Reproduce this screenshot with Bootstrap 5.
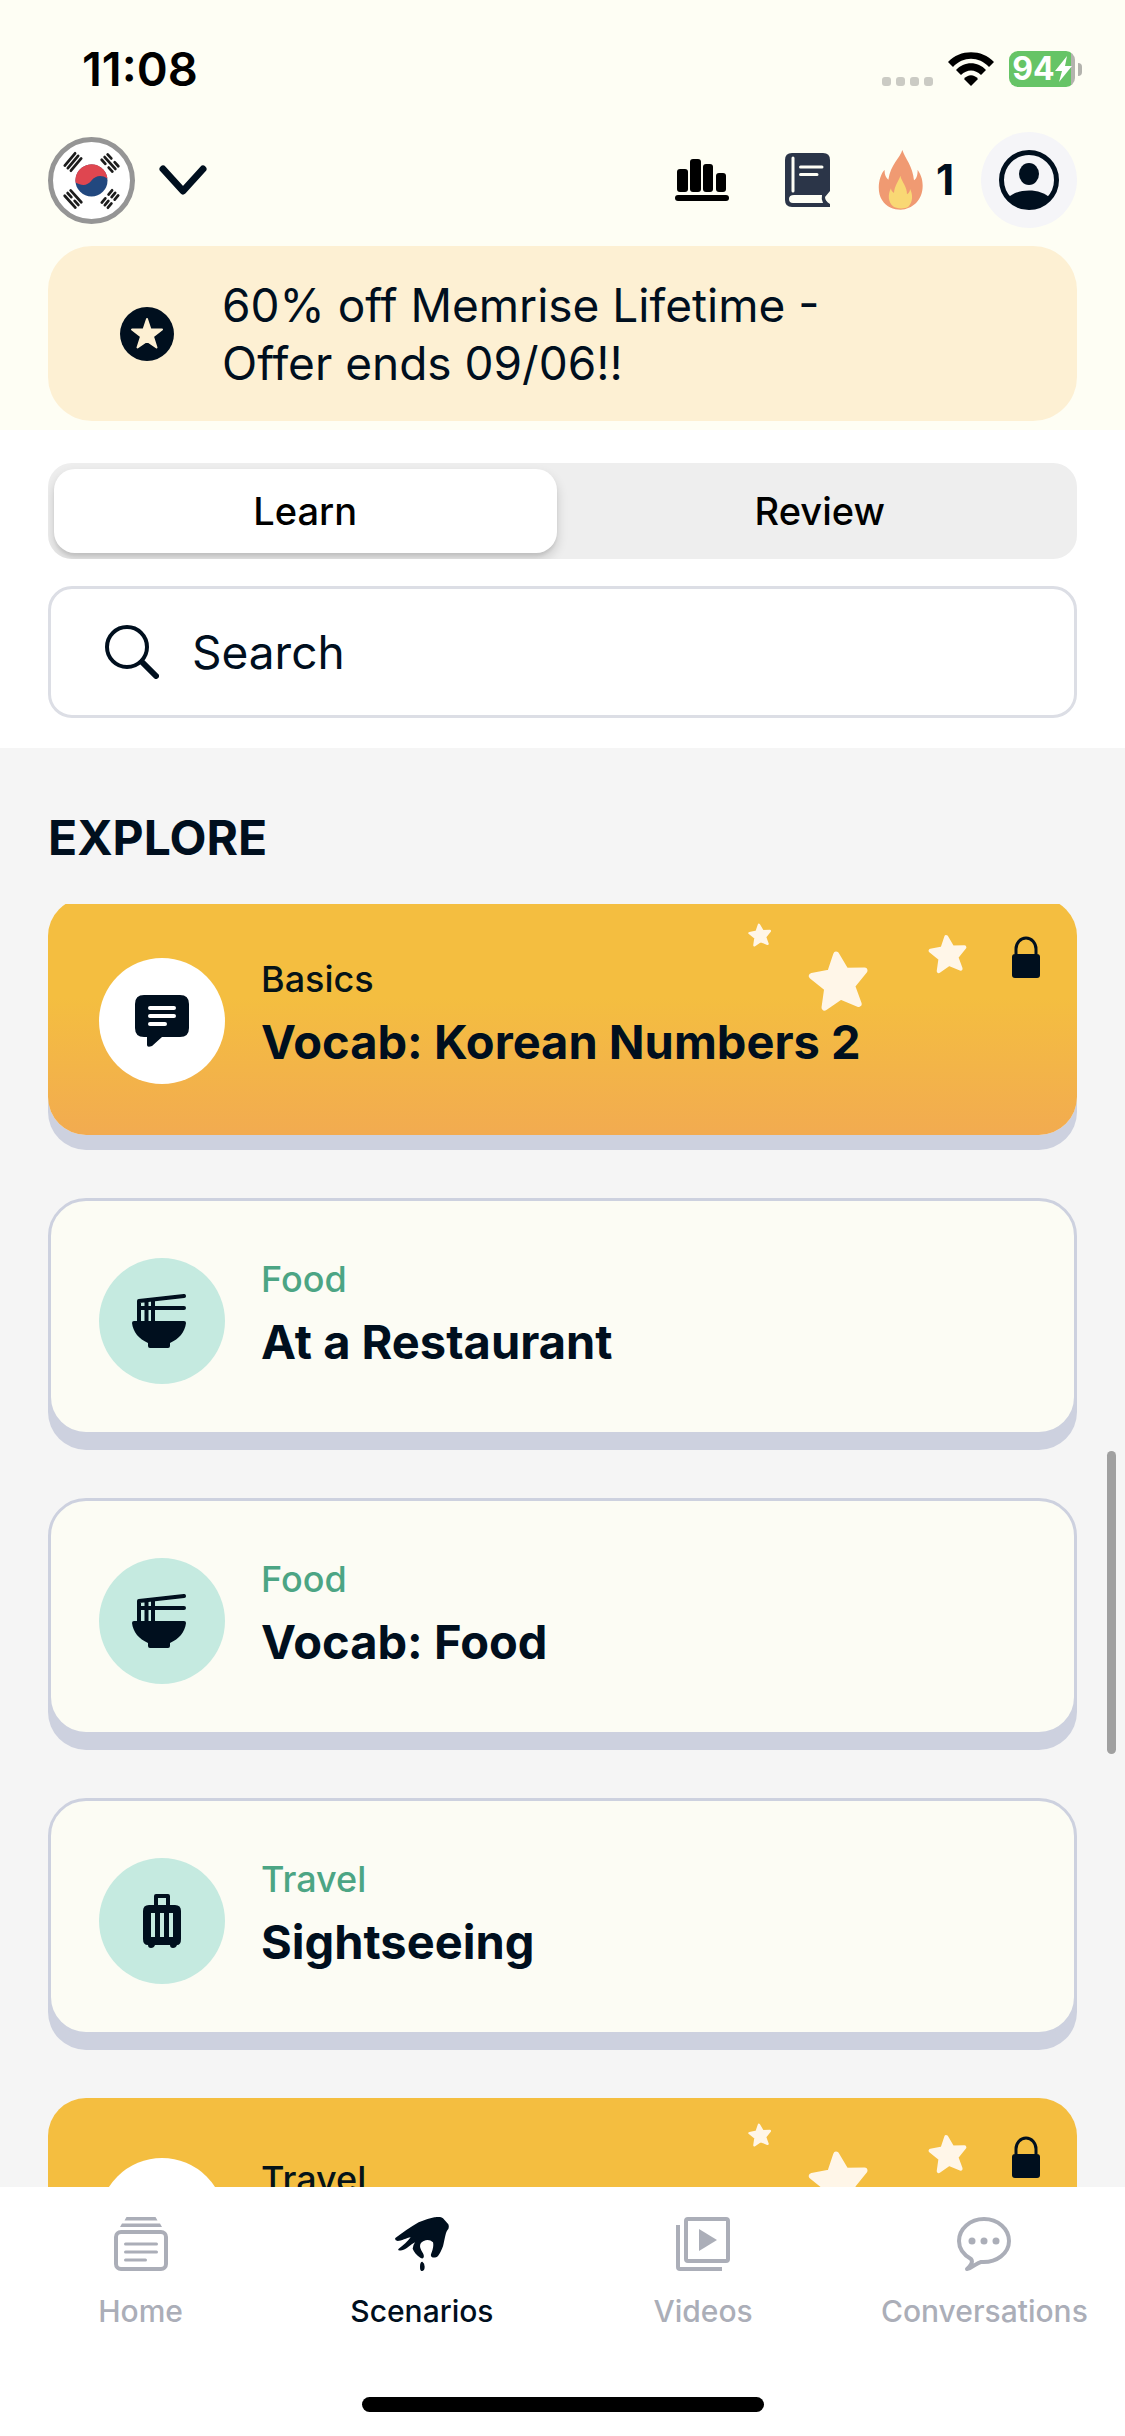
<!DOCTYPE html>
<html lang="en">
<head>
<meta charset="utf-8">
<meta name="viewport" content="width=device-width, initial-scale=1">
<title>Scenarios</title>
<link href="https://cdn.jsdelivr.net/npm/bootstrap@5.3.0/dist/css/bootstrap.min.css" rel="stylesheet">
<style>
  :root { --ink: #000f1e; --cream: #fefef4; --edge: #cdd1df; --muted-ink: #abaeb8; --gutter: 48px; }
  body { font-family: Inter, "Noto Sans", sans-serif; color: var(--ink); background: #fff; }
  svg { display: block; flex: none; }
  .gutter { padding-left: var(--gutter); padding-right: var(--gutter); }
  .app-header { background: var(--cream); padding-bottom: 9px; }

  .status-bar { padding: 45px 43px 39px 82px; height: 132px; color: #000; }
  .clock { font-size: 47px; font-weight: 600; line-height: 48px; }
  .status-icons { gap: 15px; }
  .signal { gap: 5px; padding-top: 24px; }
  .signal i { width: 9px; height: 9px; border-radius: 3px; background: #cbcbc4; }
  .battery { width: 66px; height: 36px; border-radius: 9px; color: #fff; font-size: 32px; font-weight: 700; line-height: 36px;
             background: linear-gradient(90deg, #66c466 94%, #b3b3ad 94%); }
  .battery-nub { width: 4px; height: 13px; border-radius: 0 6px 6px 0; background: #b3b3ad; margin-left: 3px; }

  .toolbar { height: 96px; margin-bottom: 18px; }
  .icon-btn { padding: 0; border: 0; background: none; color: inherit; }
  .flag-btn { gap: 24px; }
  .tools { gap: 48px; }
  .streak { gap: 13px; font-size: 42px; font-weight: 700; line-height: 48px; }
  .profile { width: 96px; height: 96px; background: #f5f5f8; margin-left: -21px; }

  .promo { background: #fdf0d3; border-radius: 44px; padding: 0 72px; gap: 48px; font-size: 46px; line-height: 58px; min-height: 175px; }
  .promo span { max-width: 620px; }

  .controls { padding-top: 33px; padding-bottom: 30px; gap: 27px; }
  .segmented { background: #eee; border-radius: 24px; padding: 6px; gap: 12px; height: 96px; overflow: hidden; }
  .segmented .nav-link { height: 84px; border-radius: 21px; padding: 0; color: #000; font-size: 38px; font-weight: 500; }
  .segmented .nav-link.active { background: #fff; color: #000; box-shadow: 0 6px 12px rgba(0,0,0,.16), 0 3px 3px rgba(0,0,0,.06); }
  .search-box { height: 132px; border: 3px solid #dcdee5; border-radius: 24px; padding: 0 54px; gap: 18px; }
  .search-box .form-control { font-size: 46px; padding: 0 15px; color: var(--ink); box-shadow: none; background: none; }
  .search-box .form-control::placeholder { color: var(--ink); opacity: 1; }

  .explore { background: #f5f5f5; min-height: 0; }
  .explore h1 { font-size: 48px; font-weight: 700; line-height: 60px; padding-top: 60px; margin: 0 0 36px; }
  .scroller { min-height: 0; overflow: hidden; }
  .scenario-list { gap: 63px; margin: -6px 0 0; padding-bottom: 63px; }
  .scenario { flex-direction: row; align-items: flex-start; flex: none; gap: 36px; padding: 57px 48px 48px; color: var(--ink);
              text-decoration: none; background: #fcfcf4; border: 3px solid var(--edge); border-radius: 38px;
              box-shadow: 0 15px 0 var(--edge); }
  .scenario.premium { border-color: transparent; background: linear-gradient(#f4be40 42%, #f2ab50) border-box; }
  .disc { width: 126px; height: 126px; background: #c5eae0; }
  .premium .disc { background: #fff; }
  .topic { font-size: 36px; line-height: 42px; font-weight: 500; color: #4ca584; margin-bottom: 12px; }
  .premium .topic { color: #051318; }
  .scenario-title { font-size: 47px; line-height: 60px; font-weight: 700; margin: 0; }
  .sparkle { top: 0; right: 0; }
  .scroll-thumb { right: 9px; top: 1451px; width: 9px; height: 303px; border-radius: 5px; background: #a0a0a0; }

  .tabbar { height: 249px; padding-top: 30px; background: #fff; }
  .tabbar .nav-link { flex: 1 1 0; padding: 0; color: var(--muted-ink); font-size: 30px; line-height: 36px; font-weight: 500; gap: 22px; }
  .tabbar .nav-link.active { color: var(--ink); }
  .home-bar { width: 402px; height: 15px; border-radius: 8px; background: #000; margin-bottom: 24px; }
</style>
</head>
<body class="vh-100 d-flex flex-column overflow-hidden position-relative">

<svg width="0" height="0" class="position-absolute" aria-hidden="true">
  <defs>
    <path id="star" d="M0-17 5-6 17-5 8 4 11 16 0 10-11 16-8 4-17-5-5-6Z" stroke-width="4" stroke-linejoin="round"/>
    <g id="tri-broken"><path d="M-8 0H-2.500M2.500 0H8"/></g>
    <g id="bowl" fill="#000f1e" stroke="none">
      <path d="M2 27H52Q54 27 54 29C53 38 47 45 38 49V52Q38 54 36 54H18Q16 54 16 52V49C7 45 1 38 0 29Q0 27 2 27Z"/>
      <path d="M7 28V7L52 2M7 14H52M14.500 28V7M21 28V6" fill="none" stroke="#000f1e" stroke-width="4" stroke-linecap="round" stroke-linejoin="round"/>
    </g>
    <g id="case">
      <path d="M13 13V2H25V13" fill="none" stroke="#000f1e" stroke-width="4" stroke-linejoin="round"/>
      <path fill="#000f1e" fill-rule="evenodd" d="M6 11H32Q38 11 38 17V45Q38 51 34 51Q33 54 30 54T27 51H12Q11 54 8 54T5 51Q0 51 0 45V17Q0 11 6 11ZM8 19V43H12V19ZM17 19V43H21V19ZM26 19V43H30V19Z"/>
    </g>
    <g id="sparkles" fill="#fff6e8" stroke="#fff6e8">
      <use href="#star" transform="translate(32 37) rotate(-6) scale(.6)"/>
      <use href="#star" transform="translate(111 83) rotate(-6) scale(1.55)"/>
      <use href="#star" transform="translate(220 56) rotate(-6) scale(1)"/>
      <path d="M288 56V51A10 11 0 0 1 308 51V56" fill="none" stroke="#000f1e" stroke-width="3"/>
      <rect x="284" y="56" width="28" height="24" rx="3" fill="#000f1e" stroke="none"/>
    </g>
  </defs>
</svg>

<header class="app-header flex-shrink-0">
  <div class="status-bar d-flex justify-content-between align-items-center">
    <span class="clock">11:08</span>
    <div class="status-icons d-flex align-items-center">
      <div class="signal d-flex"><i></i><i></i><i></i><i></i></div>
      <svg width="46" height="34" viewBox="0 0 46 34" aria-label="Wi-Fi">
        <path d="M0 10C12-3 34-3 46 10L41 15C31 4 15 4 5 15Z"/>
        <path d="M8 18C16 9 30 9 38 18L33 23C27 17 19 17 13 23Z"/>
        <path d="M16 27C20 22 26 22 30 27L23 34Z"/>
      </svg>
      <div class="d-flex align-items-center">
        <div class="battery d-flex align-items-center justify-content-center"><span>94</span>
          <svg width="17" height="26" viewBox="0 0 17 26" fill="#fff"><path d="M12 0 0 15H7L4 26 17 10H10Z"/></svg>
        </div>
        <div class="battery-nub"></div>
      </div>
    </div>
  </div>

  <div class="toolbar gutter d-flex justify-content-between align-items-center">
    <button class="icon-btn flag-btn d-flex align-items-center" aria-label="Korean course">
      <svg width="87" height="87" viewBox="0 0 87 87">
        <circle cx="43.500" cy="43.500" r="41" fill="#fff" stroke="#959595" stroke-width="5"/>
        <g transform="translate(43.500 43.500)">
          <circle r="16" fill="#22487f"/>
          <path d="M-16 2A16 16 0 0 1 16-2C10-6 4-5 0 0S-9 6-16 2Z" fill="#df4650"/>
        </g>
        <g stroke="#1c1c1c" stroke-width="2.700" stroke-linecap="round">
          <g transform="translate(25 25) rotate(-50)"><path d="M-8-4H8M-8 0H8M-8 4H8"/></g>
          <g transform="translate(62 26) rotate(48)"><use href="#tri-broken" y="-4"/><path d="M-8 0H8"/><use href="#tri-broken" y="4"/></g>
          <g transform="translate(25 62) rotate(48)"><path d="M-8-4H8M-8 4H8"/><use href="#tri-broken"/></g>
          <g transform="translate(62 62) rotate(-50)"><use href="#tri-broken" y="-4"/><use href="#tri-broken"/><use href="#tri-broken" y="4"/></g>
        </g>
      </svg>
      <svg width="48" height="30" viewBox="0 0 48 30"><path d="M4 4 24 26 44 4" fill="none" stroke="#000f1e" stroke-width="7" stroke-linecap="round" stroke-linejoin="round"/></svg>
    </button>
    <div class="tools d-flex align-items-center">
      <button class="icon-btn me-2" aria-label="Leaderboard">
        <svg width="54" height="42" viewBox="0 0 54 42">
          <rect x="2" y="10" width="11" height="23" rx="3"/><rect x="15" y="0" width="11" height="33" rx="3"/>
          <rect x="28" y="5" width="10" height="28" rx="3"/><rect x="41" y="14" width="10" height="19" rx="3"/>
          <rect y="36" width="54" height="6" rx="3"/>
        </svg>
      </button>
      <button class="icon-btn" aria-label="Dictionary">
        <svg width="45" height="54" viewBox="0 0 45 54">
          <path fill="#2b3548" d="M7 0H38Q45 0 45 7V38L40 44Q40 48 45 51V54H7Q0 54 0 47V7Q0 0 7 0Z"/>
          <path fill="#fefef5" d="M9 42H37Q36 46 38 50H8Q4 50 4 46T9 42Z"/>
          <path d="M8 5V38" stroke="#fefef5" stroke-width="3" stroke-linecap="round"/>
          <path d="M15.500 14H37M15.500 21.500H32" stroke="#fefef5" stroke-width="3" stroke-linecap="round"/>
        </svg>
      </button>
      <button class="icon-btn streak d-flex align-items-center" aria-label="Streak: 1 day">
        <svg width="45" height="60" viewBox="23 33 135 180">
          <path fill="#f09a72" d="M96 33C90 55 60 78 54 122C46 115 42 105 43 92C25 110 18 158 35 183C48 204 70 212 91 212C125 210 157 185 157 140C157 118 150 105 142 92C142 105 140 118 131 124C127 80 105 60 96 33Z"/>
          <path fill="#f9d874" d="M90 110C86 125 72 140 71 162C66 159 62 155 62 148C52 165 53 190 68 202C78 210 105 210 114 203C128 190 128 165 119 150C119 157 116 162 110 166C110 142 95 130 90 110Z"/>
        </svg>
        <span>1</span>
      </button>
      <button class="icon-btn profile rounded-circle d-flex align-items-center justify-content-center" aria-label="Profile">
        <svg width="60" height="60" viewBox="0 0 60 60">
          <circle cx="30" cy="30" r="27.500" fill="none" stroke="#000f1e" stroke-width="5"/>
          <ellipse cx="30" cy="24" rx="10" ry="11" fill="#000f1e"/>
          <path d="M9 48C18 38 42 38 51 48A28 28 0 0 1 9 48Z" fill="#000f1e"/>
        </svg>
      </button>
    </div>
  </div>

  <div class="gutter">
    <div class="promo d-flex align-items-center">
      <svg width="54" height="54" viewBox="0 0 54 54"><circle cx="27" cy="27" r="27" fill="#000f1e"/>
        <path d="M27 12 30.500 22.500H42L33 29.500 36.500 40.500 27 34 17.500 40.500 21 29.500 12 22.500H23.500Z" fill="#fdf0d3" stroke="#fdf0d3" stroke-width="2" stroke-linejoin="round"/></svg>
      <span>60% off Memrise Lifetime - Offer ends 09/06!!</span>
    </div>
  </div>
</header>

<section class="controls gutter d-flex flex-column flex-shrink-0">
  <div class="segmented nav nav-pills flex-nowrap" role="tablist">
    <button class="nav-link active w-50" role="tab" aria-selected="true">Learn</button>
    <button class="nav-link w-50" role="tab" aria-selected="false">Review</button>
  </div>
  <div class="search-box d-flex align-items-center">
    <label for="search" aria-label="Search">
      <svg width="54" height="54" viewBox="0 0 54 54" fill="none" stroke="#000f1e" stroke-linecap="round"><circle cx="22" cy="22" r="20" stroke-width="4"/><path d="M37 37 51 51" stroke-width="6"/></svg>
    </label>
    <input id="search" type="search" class="form-control border-0" placeholder="Search">
  </div>
</section>

<main class="explore flex-grow-1 d-flex flex-column">
  <h1 class="gutter">EXPLORE</h1>
  <div class="scroller flex-grow-1 gutter">
    <div class="scenario-list d-flex flex-column">
      <a href="#" class="card scenario premium">
        <span class="disc rounded-circle d-flex align-items-center justify-content-center flex-shrink-0">
          <svg width="54" height="52" viewBox="0 0 54 52"><path fill="#000f1e" d="M9 0H45Q54 0 54 9V33Q54 42 45 42H27L17 51Q12 53 12 50V42H9Q0 42 0 33V9Q0 0 9 0Z"/><path d="M15 13H39M15 21H39M15 29H30" stroke="#fff" stroke-width="4" stroke-linecap="round"/></svg>
        </span>
        <span><span class="topic d-block">Basics</span><span class="scenario-title d-block">Vocab: Korean Numbers 2</span></span>
        <svg class="sparkle position-absolute" width="346" height="150" viewBox="0 0 346 150" aria-hidden="true"><use href="#sparkles" x="0" y="-3"/></svg>
      </a>
      <a href="#" class="card scenario">
        <span class="disc rounded-circle d-flex align-items-center justify-content-center flex-shrink-0"><svg width="60" height="54" viewBox="0 0 60 54"><use href="#bowl"/></svg></span>
        <span><span class="topic d-block">Food</span><span class="scenario-title d-block">At a Restaurant</span></span>
      </a>
      <a href="#" class="card scenario">
        <span class="disc rounded-circle d-flex align-items-center justify-content-center flex-shrink-0"><svg width="60" height="54" viewBox="0 0 60 54"><use href="#bowl"/></svg></span>
        <span><span class="topic d-block">Food</span><span class="scenario-title d-block">Vocab: Food</span></span>
      </a>
      <a href="#" class="card scenario">
        <span class="disc rounded-circle d-flex align-items-center justify-content-center flex-shrink-0"><svg width="38" height="54" viewBox="0 0 38 54"><use href="#case"/></svg></span>
        <span><span class="topic d-block">Travel</span><span class="scenario-title d-block">Sightseeing</span></span>
      </a>
      <a href="#" class="card scenario premium">
        <span class="disc rounded-circle flex-shrink-0"></span>
        <span><span class="topic d-block">Travel</span></span>
        <svg class="sparkle position-absolute" width="346" height="150" viewBox="0 0 346 150" aria-hidden="true"><use href="#sparkles" x="0" y="-3"/></svg>
      </a>
    </div>
  </div>
</main>

<div class="scroll-thumb position-absolute"></div>

<footer class="tabbar d-flex flex-column justify-content-between align-items-center flex-shrink-0">
  <nav class="nav flex-nowrap w-100">
    <a class="nav-link d-flex flex-column align-items-center" href="#">
      <svg width="54" height="54" viewBox="0 0 54 54" fill="none" stroke="currentColor">
        <path d="M12.500 0H41.500L43.500 3.500H10.500ZM8 6.500H46L48 10H6Z" fill="currentColor" stroke="none"/>
        <rect x="2" y="15" width="50" height="37" rx="5" stroke-width="4"/>
        <path d="M11.500 27H42.500M11.500 35H42.500M11.500 43H31.500" stroke-width="3" stroke-linecap="round"/>
      </svg>Home</a>
    <a class="nav-link active d-flex flex-column align-items-center" href="#" aria-current="page">
      <svg width="54" height="54" viewBox="30 36 162 162" fill="currentColor">
        <path d="M148 37Q166 33 174 40L190 58Q194 68 187 76C181 84 179 106 174 124Q166 145 159 153C152 160 135 160 138 148C142 136 147 124 144 112Q134 103 122 106C108 110 103 118 106 129C110 141 119 148 116 157Q114 163 106 158C95 151 86 139 83 131Q83 122 90 112C77 119 64 133 51 136Q35 139 41 131C55 122 68 108 77 97C65 99 49 108 38 108Q28 107 31 99C55 82 75 67 101 52Q123 42 148 37Z"/>
        <path d="M112 170Q119 174 119 185T112 198T105 185T112 170Z"/>
      </svg>Scenarios</a>
    <a class="nav-link d-flex flex-column align-items-center" href="#">
      <svg width="54" height="54" viewBox="0 0 54 54" fill="none" stroke="currentColor" stroke-width="4">
        <rect x="10" y="2" width="42" height="42" rx="2"/>
        <path d="M2 8V50Q2 52 4 52H46"/>
        <path d="M23 12 41 23 23 34Z" fill="currentColor" stroke="none"/>
      </svg>Videos</a>
    <a class="nav-link d-flex flex-column align-items-center" href="#">
      <svg width="54" height="54" viewBox="0 0 54 54" fill="none" stroke="currentColor" stroke-width="4" stroke-linejoin="round">
        <path d="M10 52Q17 46 14 42C7 38 2 32 2 24C2 12 13 2 27 2S52 12 52 24S40 46 24 45C19 46 16 51 10 52Z"/>
        <g fill="currentColor" stroke="none"><circle cx="15" cy="24" r="3.500"/><circle cx="27" cy="24" r="3.500"/><circle cx="39" cy="24" r="3.500"/></g>
      </svg>Conversations</a>
  </nav>
  <div class="home-bar"></div>
</footer>

<script src="https://cdn.jsdelivr.net/npm/bootstrap@5.3.0/dist/js/bootstrap.bundle.min.js"></script>
</body>
</html>
